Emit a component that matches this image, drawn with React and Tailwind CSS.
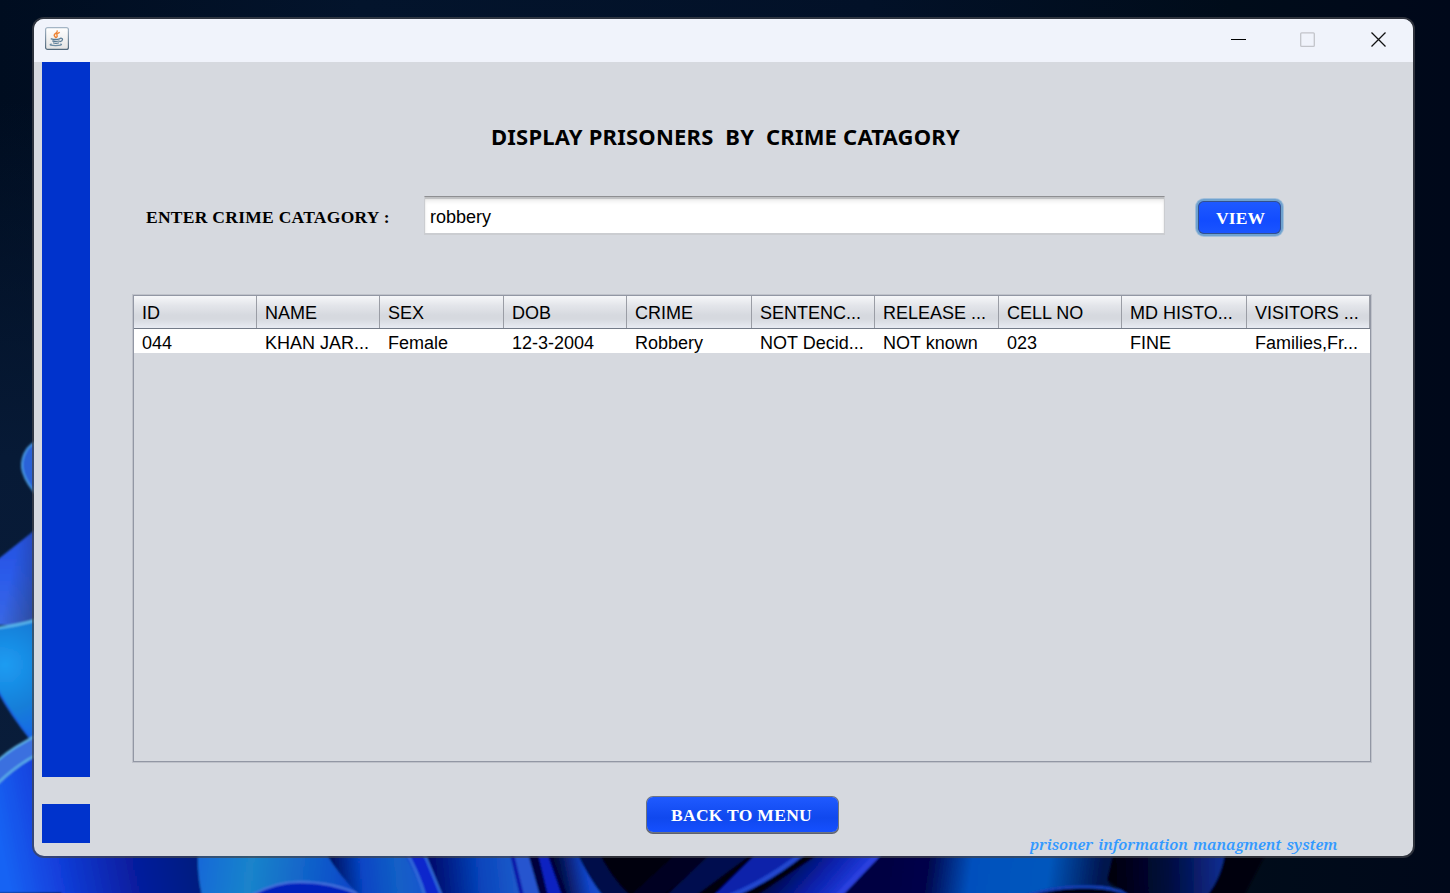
import React from "react";

const columns = [
  { title: "ID", value: "044", width: "w-[123px]" },
  { title: "NAME", value: "KHAN JAR...", width: "w-[123px]" },
  { title: "SEX", value: "Female", width: "w-[124px]" },
  { title: "DOB", value: "12-3-2004", width: "w-[123px]" },
  { title: "CRIME", value: "Robbery", width: "w-[125px]" },
  { title: "SENTENC...", value: "NOT Decid...", width: "w-[123px]" },
  { title: "RELEASE ...", value: "NOT known", width: "w-[124px]" },
  { title: "CELL NO", value: "023", width: "w-[123px]" },
  { title: "MD HISTO...", value: "FINE", width: "w-[125px]" },
  { title: "VISITORS ...", value: "Families,Fr...", width: "w-[123px]" },
];

function Wallpaper() {
  return (
    <svg className="absolute inset-0" width="1450" height="893" viewBox="0 0 1450 893" aria-hidden="true">
      <defs>
        <linearGradient id="night" x1="0" y1="0" x2="1" y2="0">
          <stop offset="0" stopColor="#000d20" />
          <stop offset=".25" stopColor="#03142c" />
          <stop offset=".6" stopColor="#021128" />
          <stop offset=".85" stopColor="#000c1a" />
          <stop offset="1" stopColor="#00081a" />
        </linearGradient>
        <linearGradient id="leftGlow" x1="0" y1="0" x2="0" y2="1">
          <stop offset="0" stopColor="#071a36" stopOpacity="0" />
          <stop offset=".45" stopColor="#071a36" />
          <stop offset="1" stopColor="#0a1e3c" />
        </linearGradient>
        <linearGradient id="petalA" x1="0" y1="0" x2="0" y2="1">
          <stop offset="0" stopColor="#2450dc" />
          <stop offset=".5" stopColor="#2b5bea" />
          <stop offset="1" stopColor="#3a68e4" />
        </linearGradient>
        <linearGradient id="shade" x1="0" y1="0" x2="1" y2=".5">
          <stop offset=".45" stopColor="#20305c" stopOpacity="0" />
          <stop offset="1" stopColor="#20305c" stopOpacity=".45" />
        </linearGradient>
        <radialGradient id="petalB" gradientUnits="userSpaceOnUse" cx="5" cy="665" r="75">
          <stop offset="0" stopColor="#1c9cf2" />
          <stop offset=".6" stopColor="#167ed8" />
          <stop offset="1" stopColor="#1769e6" />
        </radialGradient>
        <linearGradient id="big" gradientUnits="userSpaceOnUse" x1="0" y1="840" x2="200" y2="800">
          <stop offset="0" stopColor="#1763f4" />
          <stop offset=".25" stopColor="#123fdc" />
          <stop offset=".6" stopColor="#071ea0" />
          <stop offset="1" stopColor="#001a78" />
        </linearGradient>
        <linearGradient id="cyan" gradientUnits="userSpaceOnUse" x1="198" y1="860" x2="350" y2="880">
          <stop offset="0" stopColor="#1769d8" />
          <stop offset=".35" stopColor="#1a84cb" />
          <stop offset="1" stopColor="#0a48c9" />
        </linearGradient>
        <linearGradient id="fold1" gradientUnits="userSpaceOnUse" x1="328" y1="870" x2="425" y2="860">
          <stop offset="0" stopColor="#000c55" />
          <stop offset=".35" stopColor="#0745c5" />
          <stop offset=".7" stopColor="#125fc6" />
          <stop offset="1" stopColor="#1756cf" />
        </linearGradient>
        <linearGradient id="fold2" gradientUnits="userSpaceOnUse" x1="430" y1="875" x2="530" y2="865">
          <stop offset="0" stopColor="#01096a" />
          <stop offset=".5" stopColor="#0744bb" />
          <stop offset="1" stopColor="#2563d0" />
        </linearGradient>
        <linearGradient id="fold3" gradientUnits="userSpaceOnUse" x1="555" y1="870" x2="605" y2="860">
          <stop offset="0" stopColor="#000431" />
          <stop offset=".6" stopColor="#1245c9" />
          <stop offset="1" stopColor="#2260d2" />
        </linearGradient>
        <linearGradient id="ray" gradientUnits="userSpaceOnUse" x1="790" y1="850" x2="840" y2="893">
          <stop offset="0" stopColor="#02033a" />
          <stop offset=".6" stopColor="#0820a8" />
          <stop offset="1" stopColor="#2038d8" />
        </linearGradient>
        <linearGradient id="lake" gradientUnits="userSpaceOnUse" x1="885" y1="860" x2="1100" y2="890">
          <stop offset="0" stopColor="#010242" />
          <stop offset=".2" stopColor="#01054a" />
          <stop offset=".4" stopColor="#0650bd" />
          <stop offset=".75" stopColor="#0557bd" />
          <stop offset="1" stopColor="#02144e" />
        </linearGradient>
        <linearGradient id="edge" gradientUnits="userSpaceOnUse" x1="1110" y1="870" x2="1225" y2="865">
          <stop offset="0" stopColor="#00000c" />
          <stop offset=".5" stopColor="#020a3d" />
          <stop offset="1" stopColor="#0c2f94" />
        </linearGradient>
        <filter id="soft" x="-10%" y="-10%" width="120%" height="120%">
          <feGaussianBlur stdDeviation="0.8" />
        </filter>
      </defs>
      <rect width="1450" height="893" fill="url(#night)" />
      <rect y="100" width="40" height="793" fill="url(#leftGlow)" />
      <g filter="url(#soft)">
        <path d="M40 441C24 444 20 462 23 472C26 482 32 490 40 498Z" fill="#2a62d8" stroke="#4a9de8" strokeWidth="2" />
        <path d="M-3 560L40 526V625H-3Z" fill="url(#petalA)" />
        <path d="M-3 560L40 526V625H-3Z" fill="url(#shade)" />
        <path d="M-3 628Q20 625 40 619V748Q18 727 -3 688Z" fill="url(#petalB)" />
        <path d="M-3 628Q20 625 40 619" fill="none" stroke="#5bb8ec" strokeWidth="2.5" />
        <path d="M-3 689Q12 716 30 738" fill="none" stroke="#1b62e6" strokeWidth="2" />
        <path d="M-3 762Q14 746 40 735L240 893H-3Z" fill="url(#big)" />
        <path d="M-3 762Q14 746 40 734V753Q18 766 -3 786Z" fill="#3a70df" />
        <path d="M-3 761Q14 746 40 734M-3 784Q16 765 40 753" fill="none" stroke="#5fb5e8" strokeWidth="2" />
        <path d="M90 850H205V896H60Z" fill="url(#big)" />
        <path d="M198 850H325Q338 870 360 896H202Q197 875 198 850Z" fill="url(#cyan)" />
        <path d="M250 896Q274 882 300 882Q334 882 363 896Z" fill="#0522bd" stroke="#4774df" strokeWidth="2" />
        <path d="M324 850H427L442 896H360Q339 876 324 850Z" fill="url(#fold1)" />
        <path d="M402 850H425L442 896H424Q415 870 402 850Z" fill="#0a27cc" />
        <path d="M405 850Q418 872 425 896M423 850L442 896" fill="none" stroke="#316cd9" strokeWidth="3" />
        <path d="M424 850H529L540 896H443Z" fill="url(#fold2)" />
        <path d="M511 850H527L540 896H522Z" fill="#2554cf" />
        <path d="M511 850L522 896" stroke="#0819a7" strokeWidth="4" />
        <path d="M527 850H550L570 896H540Z" fill="#00003d" />
        <path d="M537 850H546L562 896H548Z" fill="#0822c1" />
        <path d="M549 850H576Q586 873 603 896H568Z" fill="url(#fold3)" />
        <path d="M576 850H605Q613 876 630 896H603Q588 877 576 850Z" fill="#030c48" />
        <path d="M598 850H960L850 896H630Q608 874 598 850Z" fill="#000008" />
        <path d="M680 850H720L662 896H630Z" fill="#010623" />
        <path d="M715 850H757L695 896H666Z" fill="#03104f" />
        <path d="M760 850H806Q767 882 735 896H713Z" fill="#0720aa" />
        <path d="M803 853Q766 882 730 896" fill="none" stroke="#2347cf" strokeWidth="5" />
        <path d="M825 850H883L842 896H756Z" fill="url(#ray)" />
        <path d="M882 850H1114L1108 882L1120 896H843Z" fill="url(#lake)" />
        <path d="M879 853L838 896" stroke="#2c40de" strokeWidth="6" />
        <path d="M1025 896Q1056 886 1085 887Q1113 886 1132 896Z" fill="#000108" stroke="#173fb5" strokeWidth="3" />
        <path d="M1114 850H1225Q1223 875 1207 896H1130L1107 880Z" fill="url(#edge)" />
        <path d="M1225 850H1268L1244 896H1207Q1225 875 1225 850Z" fill="#02020e" />
      </g>
    </svg>
  );
}

function JavaIcon() {
  return (
    <svg width="24" height="24" viewBox="0 0 24 24" aria-hidden="true">
      <defs>
        <linearGradient id="tile" x1="0" y1="0" x2="0" y2="1">
          <stop offset="0" stopColor="#ffffff" />
          <stop offset="1" stopColor="#e4e4e4" />
        </linearGradient>
        <linearGradient id="tileEdge" x1="0" y1="0" x2="0" y2="1">
          <stop offset="0" stopColor="#a4b5c5" />
          <stop offset="1" stopColor="#52697c" />
        </linearGradient>
      </defs>
      <rect x=".6" y=".6" width="22.8" height="21.8" rx="2" fill="url(#tile)" stroke="url(#tileEdge)" strokeWidth="1.2" />
      <path d="M12.2 4C12.8 6 9 6.6 9.2 8.4C9.3 9.2 10.4 9.8 10.8 10.6M14.2 5.6C12.4 6.4 11.4 7.2 12 8.3C12.4 9 12.2 9.8 11.6 10.3" fill="none" stroke="#ee8434" strokeWidth="1.4" strokeLinecap="round" />
      <path d="M6.2 11.8Q10.5 13 14.6 11.9M15.2 11.3C18.4 10.6 18.2 14 15 14.6M7.8 14Q11 14.9 14 14M8.6 16Q11 16.8 13.4 16" fill="none" stroke="#587b95" strokeWidth="1.3" strokeLinecap="round" />
      <path d="M6.2 17C3.4 17.9 6.4 18.6 10.6 18.6C14.8 18.6 18 17.9 15.8 17" fill="none" stroke="#6d8da4" strokeWidth="1.2" strokeLinecap="round" />
    </svg>
  );
}

function TitleBar() {
  return (
    <header className="flex h-[43px] shrink-0 items-start bg-[#f0f3fb] pl-[11px] pt-2">
      <JavaIcon />
      <div className="ml-auto flex pr-[26px] pt-[5px]">
        <svg width="16" height="16" viewBox="0 0 16 16" className="mr-[53px]">
          <path d="M0 7.5H15" stroke="#000" />
        </svg>
        <svg width="16" height="16" viewBox="0 0 16 16" className="mr-[55px]">
          <rect x=".7" y=".8" width="13.6" height="13.6" rx="1" fill="none" stroke="#c2c4ca" strokeWidth="1.3" />
        </svg>
        <svg width="16" height="16" viewBox="0 0 16 16">
          <path d="M.5 .5L14.5 14.5M14.5 .5L.5 14.5" stroke="#111" strokeWidth="1.3" />
        </svg>
      </div>
    </header>
  );
}

function PrisonerTable() {
  return (
    <div className="ml-[43px] mt-[60px] h-[467px] w-[1238px] border border-[#9297a4] font-['Liberation_Sans',Arial,sans-serif] text-[18px] text-black shadow-[0_0_0_1px_#bfc2ca]">
      <div className="flex h-[33px] border-b border-[#747b88] bg-[linear-gradient(to_bottom,#f6f7f9_0%,#e3e5ea_30%,#d6d9df_60%,#d6d9df_72%,#e8ebf2_100%)]">
        {columns.map((c) => (
          <div key={c.title} className={`${c.width} shrink-0 overflow-hidden border-r border-[#9a9da5] pl-2 leading-[35px] whitespace-pre`}>
            {c.title}
          </div>
        ))}
      </div>
      <div className="flex h-6 bg-white">
        {columns.map((c) => (
          <div key={c.title} className={`${c.width} shrink-0 pl-2 leading-[29px] whitespace-pre`}>
            {c.value}
          </div>
        ))}
      </div>
    </div>
  );
}

export default function App() {
  return (
    <div className="relative h-[893px] w-[1450px] overflow-hidden bg-[#000d20] pl-[34px] pt-[19px]">
      <Wallpaper />
      <div className="relative flex h-[837px] w-[1379px] flex-col overflow-hidden rounded-[10px] bg-[#d6d9df] shadow-[0_0_0_2px_rgba(65,68,76,0.7)]">
        <TitleBar />
        <div className="flex min-h-0 flex-1">
          <aside className="ml-2 flex w-12 flex-col gap-[27px]">
            <div className="h-[715px] bg-[#0033cc]" />
            <div className="h-[39px] bg-[#0033cc]" />
          </aside>
          <main className="flex flex-1 flex-col">
            <h1 className="ml-[401px] mt-[59px] h-[31px] whitespace-pre font-['Noto_Sans',sans-serif] text-[22px] font-bold leading-[30px] tracking-[0.2px] text-black">
              {"DISPLAY PRISONERS  BY  CRIME CATAGORY"}
            </h1>
            <div className="mt-11 flex h-[39px]">
              <label className="ml-14 w-[278px] whitespace-pre font-['Liberation_Serif',serif] text-[17.5px] font-bold leading-[43px] tracking-[0.28px] text-black">
                ENTER CRIME CATAGORY :
              </label>
              <div className="w-[741px] border border-b-2 border-[#cbcdd1] border-t-[#8e8f92] bg-white pl-[5px] font-['Liberation_Sans',Arial,sans-serif] text-[18px] leading-[40px] text-black shadow-[inset_0_2px_1px_#bfc0c2,inset_0_5px_4px_-1px_#e8e8e8]">
                robbery
              </div>
              <button className="ml-[33px] mt-[5px] h-[33px] w-[83px] rounded-[6px] bg-[linear-gradient(to_bottom,#1f5aff,#124cff_60%,#1b55ff)] pl-[2px] text-center font-['Liberation_Serif',serif] text-[17.5px] font-bold leading-[32px] tracking-[0.1px] text-white shadow-[inset_0_0_0_1px_#33508c,0_0_0_2px_#6fa2cf,0_0_0_3px_#a3bfda]">
                VIEW
              </button>
            </div>
            <PrisonerTable />
            <button className="ml-[557px] mt-[35px] h-[35px] w-[191px] shrink-0 rounded-[6px] bg-[linear-gradient(to_bottom,#1f5aff,#1048ee_60%,#1550ff)] pr-[2px] text-center font-['Liberation_Serif',serif] text-[17.5px] font-bold leading-[34px] tracking-[0.3px] text-white shadow-[0_0_0_1px_#6e7480,0_1px_0_1px_#5c6070]">
              BACK TO MENU
            </button>
            <footer className="ml-[940px] mt-px h-[22px] whitespace-pre font-['Noto_Serif','Liberation_Serif',serif] text-[15px] font-semibold italic leading-[22px] tracking-[-0.08px] [word-spacing:1.5px] text-[#3399ff]">
              prisoner information managment system
            </footer>
          </main>
        </div>
      </div>
    </div>
  );
}
